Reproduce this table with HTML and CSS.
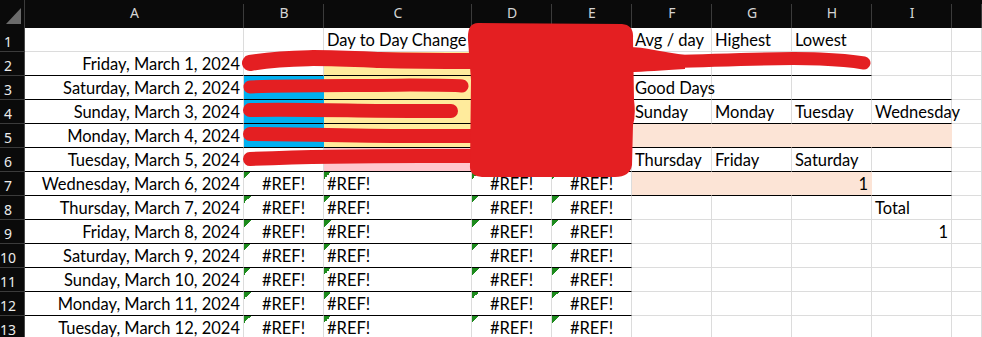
FILE: index.html
```html
<!DOCTYPE html>
<html>
<head>
<meta charset="utf-8">
<link rel="stylesheet" href="styles.css">
</head>
<body>
<div class="page">
<div class="sheet">
  <div class="corner"><svg class="tri" width="16" height="17" viewBox="0 0 16 17"><polygon points="15,0 15,16 0,16" fill="#6b6b6b"/></svg></div>
  <div class="ch">A</div><div class="ch">B</div><div class="ch">C</div><div class="ch">D</div><div class="ch">E</div><div class="ch">F</div><div class="ch">G</div><div class="ch">H</div><div class="ch">I</div><div class="ch"></div>

  <div class="rh">1</div><div class="c"></div><div class="c"></div><div class="c">Day to Day Change</div><div class="c"></div><div class="c"></div><div class="c">Avg / day</div><div class="c">Highest</div><div class="c">Lowest</div><div class="c"></div><div class="c"></div>

  <div class="rh">2</div><div class="c r bk">Friday, March 1, 2024</div><div class="c bk"></div><div class="c yel bk"></div><div class="c bk"></div><div class="c bk"></div><div class="c bk"></div><div class="c bk"></div><div class="c bk"></div><div class="c"></div><div class="c"></div>

  <div class="rh">3</div><div class="c r bk">Saturday, March 2, 2024</div><div class="c blue bk"></div><div class="c yel bk"></div><div class="c bk"></div><div class="c bk"></div><div class="c bk">Good Days</div><div class="c bk"></div><div class="c bk"></div><div class="c bk"></div><div class="c"></div>

  <div class="rh">4</div><div class="c r bk">Sunday, March 3, 2024</div><div class="c blue bk"></div><div class="c yel bk"></div><div class="c bk"></div><div class="c bk"></div><div class="c bk">Sunday</div><div class="c bk">Monday</div><div class="c bk">Tuesday</div><div class="c bk">Wednesday</div><div class="c"></div>

  <div class="rh">5</div><div class="c r bk">Monday, March 4, 2024</div><div class="c blue bk"></div><div class="c yel bk"></div><div class="c bk"></div><div class="c bk"></div><div class="c peach bk"></div><div class="c peach bk"></div><div class="c peach bk"></div><div class="c peach bk"></div><div class="c"></div>

  <div class="rh">6</div><div class="c r bk">Tuesday, March 5, 2024</div><div class="c bk"></div><div class="c pink bk"></div><div class="c bk"></div><div class="c bk"></div><div class="c bk">Thursday</div><div class="c bk">Friday</div><div class="c bk">Saturday</div><div class="c bk"></div><div class="c"></div>

  <div class="rh">7</div><div class="c r bk">Wednesday, March 6, 2024</div><div class="c ctr err bk">#REF!</div><div class="c err bk">#REF!</div><div class="c ctr err bk">#REF!</div><div class="c ctr err bk">#REF!</div><div class="c peach bk"></div><div class="c peach bk"></div><div class="c peach r bk">1</div><div class="c bk"></div><div class="c"></div>

  <div class="rh">8</div><div class="c r bk">Thursday, March 7, 2024</div><div class="c ctr err bk">#REF!</div><div class="c err bk">#REF!</div><div class="c ctr err bk">#REF!</div><div class="c ctr err bk">#REF!</div><div class="c"></div><div class="c"></div><div class="c"></div><div class="c">Total</div><div class="c"></div>

  <div class="rh">9</div><div class="c r bk">Friday, March 8, 2024</div><div class="c ctr err bk">#REF!</div><div class="c err bk">#REF!</div><div class="c ctr err bk">#REF!</div><div class="c ctr err bk">#REF!</div><div class="c"></div><div class="c"></div><div class="c"></div><div class="c r">1</div><div class="c"></div>

  <div class="rh">10</div><div class="c r bk">Saturday, March 9, 2024</div><div class="c ctr err bk">#REF!</div><div class="c err bk">#REF!</div><div class="c ctr err bk">#REF!</div><div class="c ctr err bk">#REF!</div><div class="c"></div><div class="c"></div><div class="c"></div><div class="c"></div><div class="c"></div>

  <div class="rh">11</div><div class="c r bk">Sunday, March 10, 2024</div><div class="c ctr err bk">#REF!</div><div class="c err bk">#REF!</div><div class="c ctr err bk">#REF!</div><div class="c ctr err bk">#REF!</div><div class="c"></div><div class="c"></div><div class="c"></div><div class="c"></div><div class="c"></div>

  <div class="rh">12</div><div class="c r bk">Monday, March 11, 2024</div><div class="c ctr err bk">#REF!</div><div class="c err bk">#REF!</div><div class="c ctr err bk">#REF!</div><div class="c ctr err bk">#REF!</div><div class="c"></div><div class="c"></div><div class="c"></div><div class="c"></div><div class="c"></div>

  <div class="rh">13</div><div class="c r bk">Tuesday, March 12, 2024</div><div class="c ctr err bk">#REF!</div><div class="c err bk">#REF!</div><div class="c ctr err bk">#REF!</div><div class="c ctr err bk">#REF!</div><div class="c"></div><div class="c"></div><div class="c"></div><div class="c"></div><div class="c"></div>
</div>

<svg class="ink" width="982" height="337" viewBox="0 0 982 337">
  <g fill="none" stroke="#e41f22" stroke-linecap="round" stroke-linejoin="round">
    <path d="M250,63 C290,56 330,58 380,60 C420,61 450,61 472,61" stroke-width="16"/>
    <path d="M250,87 C300,85 360,86 410,85 C440,85 455,85 462,86" stroke-width="13"/>
    <path d="M250,110 C300,109 360,111 410,111 C430,111 445,111 451,111" stroke-width="14"/>
    <path d="M250,134 C300,134 360,136 420,136 C440,136 460,136 472,136" stroke-width="14"/>
    <path d="M250,159 C300,157 360,156 420,156 C445,156 460,156 472,156" stroke-width="14"/>
    <path d="M645,62 C700,62 760,57 820,59 C845,60 858,62 864,63" stroke-width="13"/>
  </g>
  <g fill="#e41f22">
    <path d="M478,23 L622,24 Q634,25 633,38 L634,100 Q636,115 633,125 L632,165 Q630,177 615,177 L482,177 Q469,176 470,165 L471,80 L468,40 Q467,23 478,23 Z"/>
    <path d="M628,47 C645,47 662,52 685,55 L685,69 C662,70 645,72 628,72 Z"/>
  </g>
</svg>
</div>
</body>
</html>
```

FILE: styles.css
```css
* { box-sizing: border-box; }
html, body { margin: 0; padding: 0; background: #fff; }
body { width: 982px; height: 337px; overflow: hidden; }

.page { position: relative; width: 982px; height: 337px; overflow: hidden; }

.sheet {
  display: grid;
  grid-template-columns: 25px 219px 80px 148px 80px 80px 80px 80px 80px 80px 1fr;
  grid-template-rows: 28px repeat(13, 24px);
  width: 982px;
  font-family: Lato, "Liberation Sans", sans-serif;
  font-size: 16.5px;
  color: #000;
}

.corner {
  background: #0a0a0a;
  display: flex;
  align-items: flex-start;
  justify-content: flex-end;
  padding: 8px 2px 0 0;
  border-right: 1px solid #3b3b3b;
}

.ch {
  background: #0a0a0a linear-gradient(#3b3b3b, #3b3b3b) right bottom / 1px 24px no-repeat;
  color: #d4d4d4;
  font-family: "Noto Sans", "Open Sans", sans-serif;
  font-size: 14px;
  line-height: 26px;
  text-align: center;
}

.rh {
  background: #0a0a0a;
  color: #ececec;
  font-family: "Noto Sans", "Open Sans", sans-serif;
  font-size: 14px;
  line-height: 23px;
  padding-right: 8px;
  text-align: center;
  border-bottom: 1px solid #3b3b3b;
  border-right: 1px solid #4a4a4a;
  padding-top: 2px;
}

.c {
  border-right: 1px solid #dcdcdc;
  border-bottom: 1px solid #dcdcdc;
  padding: 0 3px 0 3px;
  line-height: 24px;
  white-space: nowrap;
}

.r { text-align: right; }
.ctr { text-align: center; }
.bk { border-bottom-color: #000; }

.blue { background-color: #00b0f0; border-right-color: transparent; }
.yel { background-color: #ffeb9c; border-right-color: transparent; }
.pink { background-color: #ffc7ce; border-right-color: transparent; }
.peach { background-color: #fce4d6; border-right-color: transparent; }

.err {
  background-image: linear-gradient(135deg, #1d8b1d 50%, transparent 50%);
  background-size: 7px 7px;
  background-repeat: no-repeat;
}

.ink { position: absolute; left: 0; top: 0; pointer-events: none; }
```
